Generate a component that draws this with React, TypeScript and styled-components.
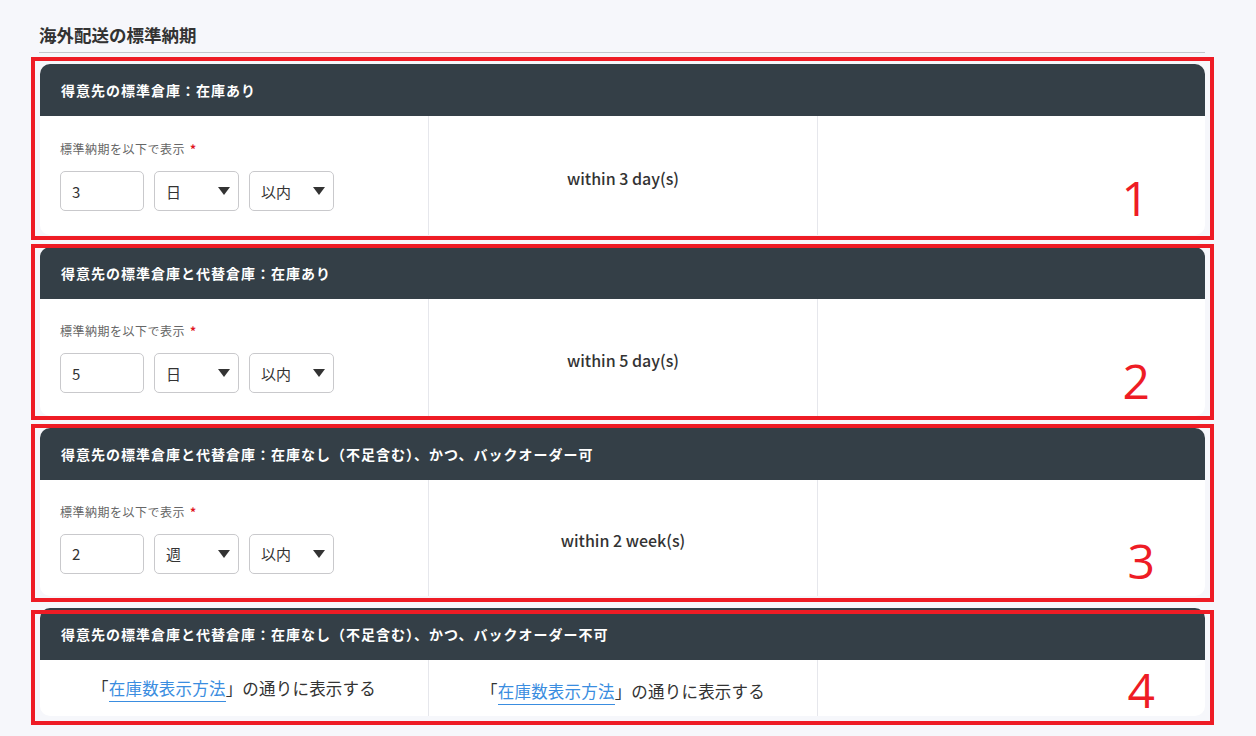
import React from "react";
import styled, { createGlobalStyle } from "styled-components";

const Global = createGlobalStyle`
  html, body { margin: 0; padding: 0; background: #f6f7fb; }
  body { font-family: "Noto Sans CJK JP", "Noto Sans", sans-serif; color: #333; }
`;

const Page = styled.div`
  padding: 22px 51px 20px 40px;
`;

const Title = styled.h2`
  margin: 0;
  font-size: 17.5px;
  font-weight: 700;
  line-height: 26px;
  color: #333;
  padding-bottom: 4px;
  border-bottom: 1px solid #c4c6cc;
  margin-left: -1px;
`;

const CardList = styled.div`
  display: flex;
  flex-direction: column;
  gap: 12px;
  margin-top: 11px;
`;

const CardWrap = styled.div`
  position: relative;
`;

const Card = styled.section`
  border-radius: 10px;
  background: #fff;
  overflow: hidden;
`;

const Header = styled.div`
  height: 52px;
  background: #343f47;
  color: #fff;
  font-weight: 700;
  font-size: 14px;
  letter-spacing: 1px;
  display: flex;
  align-items: center;
  padding-left: 21px;
`;

const Body = styled.div<{ $h: number }>`
  display: grid;
  grid-template-columns: 388px 389px 1fr;
  height: ${(p) => p.$h}px;
`;

const Col = styled.div<{ $center?: boolean; $divider?: boolean }>`
  border-left: ${(p) => (p.$divider ? "1px solid #e6e7ec" : "none")};
  display: flex;
  flex-direction: column;
  justify-content: center;
  align-items: ${(p) => (p.$center ? "center" : "flex-start")};
  padding: 0 20px;
`;

const FieldLabel = styled.div`
  font-size: 12px;
  letter-spacing: 0.5px;
  color: #666;
  line-height: 20px;
  margin-bottom: 12px;
  margin-top: -1px;
`;

const Req = styled.span`
  color: #e0141e;
  font-weight: 700;
  margin-left: 5px;
`;

const Controls = styled.div`
  display: flex;
  gap: 10px;
`;

const NumInput = styled.div`
  box-sizing: border-box;
  width: 84px;
  height: 40px;
  border: 1px solid #c9c9cc;
  border-radius: 5px;
  display: flex;
  align-items: center;
  padding-left: 11px;
  font-size: 15px;
  color: #333;
`;

const Select = styled.div`
  box-sizing: border-box;
  width: 85px;
  height: 40px;
  border: 1px solid #c9c9cc;
  border-radius: 5px;
  display: flex;
  align-items: center;
  justify-content: space-between;
  padding: 0 8px 0 11px;
  font-size: 15px;
  color: #333;
`;

const Caret = styled.span`
  width: 0;
  height: 0;
  border-left: 6.5px solid transparent;
  border-right: 6.5px solid transparent;
  border-top: 8px solid #333;
`;

const Preview = styled.div`
  font-size: 16px;
  font-weight: 500;
  color: #333;
  margin-top: 4px;
`;

const Note = styled.div<{ $dy?: number }>`
  font-size: 16.5px;
  letter-spacing: 0.2px;
  color: #333;
  margin-top: ${(p) => p.$dy ?? 0}px;
`;

const Link = styled.a`
  color: #3a8de0;
  text-decoration: none;
  border-bottom: 1px solid #3a8de0;
  padding-bottom: 1px;
`;

const Frame = styled.div<{ $top: number; $bottom: number }>`
  position: absolute;
  left: -9px;
  right: -9px;
  top: ${(p) => p.$top}px;
  bottom: ${(p) => p.$bottom}px;
  border: 4.5px solid #ee1c25;
  pointer-events: none;
`;

const Mark = styled.span<{ $top: number; $right: number }>`
  position: absolute;
  right: ${(p) => p.$right}px;
  top: ${(p) => p.$top}px;
  font-family: "Open Sans", "Noto Sans", sans-serif;
  font-size: 48px;
  line-height: 1;
  color: #ee1c25;
  pointer-events: none;
`;

type Row = {
  title: string;
  value?: string;
  unit?: string;
  preview?: string;
  body: number;
  mark: string;
  frameTop: number;
  frameBottom: number;
  markTop: number;
  markRight: number;
};

const rows: Row[] = [
  { title: "得意先の標準倉庫：在庫あり", value: "3", unit: "日", preview: "within 3 day(s)", body: 119, mark: "1", frameTop: -7, frameBottom: -5, markTop: 110, markRight: 56 },
  { title: "得意先の標準倉庫と代替倉庫：在庫あり", value: "5", unit: "日", preview: "within 5 day(s)", body: 117, mark: "2", frameTop: -3, frameBottom: -4, markTop: 110, markRight: 55 },
  { title: "得意先の標準倉庫と代替倉庫：在庫なし（不足含む）、かつ、バックオーダー可", value: "2", unit: "週", preview: "within 2 week(s)", body: 116, mark: "3", frameTop: -4, frameBottom: -6, markTop: 109, markRight: 50 },
  { title: "得意先の標準倉庫と代替倉庫：在庫なし（不足含む）、かつ、バックオーダー不可", body: 56, mark: "4", frameTop: 2, frameBottom: -9, markTop: 58, markRight: 50 },
];

const LinkNote = ({ dy }: { dy?: number }) => (
  <Note $dy={dy}>
    「<Link>在庫数表示方法</Link>」の通りに表示する
  </Note>
);

export default function App() {
  return (
    <>
      <Global />
      <Page>
        <Title>海外配送の標準納期</Title>
        <CardList>
          {rows.map((r) => (
            <CardWrap key={r.mark}>
              <Card>
                <Header>{r.title}</Header>
                {r.value ? (
                  <Body $h={r.body}>
                    <Col>
                      <FieldLabel>
                        標準納期を以下で表示<Req>*</Req>
                      </FieldLabel>
                      <Controls>
                        <NumInput>{r.value}</NumInput>
                        <Select>
                          {r.unit}
                          <Caret />
                        </Select>
                        <Select>
                          以内
                          <Caret />
                        </Select>
                      </Controls>
                    </Col>
                    <Col $center $divider>
                      <Preview>{r.preview}</Preview>
                    </Col>
                    <Col $divider />
                  </Body>
                ) : (
                  <Body $h={r.body}>
                    <Col $center>
                      <LinkNote />
                    </Col>
                    <Col $center $divider>
                      <LinkNote dy={5} />
                    </Col>
                    <Col $divider />
                  </Body>
                )}
              </Card>
              <Frame $top={r.frameTop} $bottom={r.frameBottom} />
              <Mark $top={r.markTop} $right={r.markRight}>{r.mark}</Mark>
            </CardWrap>
          ))}
        </CardList>
      </Page>
    </>
  );
}
